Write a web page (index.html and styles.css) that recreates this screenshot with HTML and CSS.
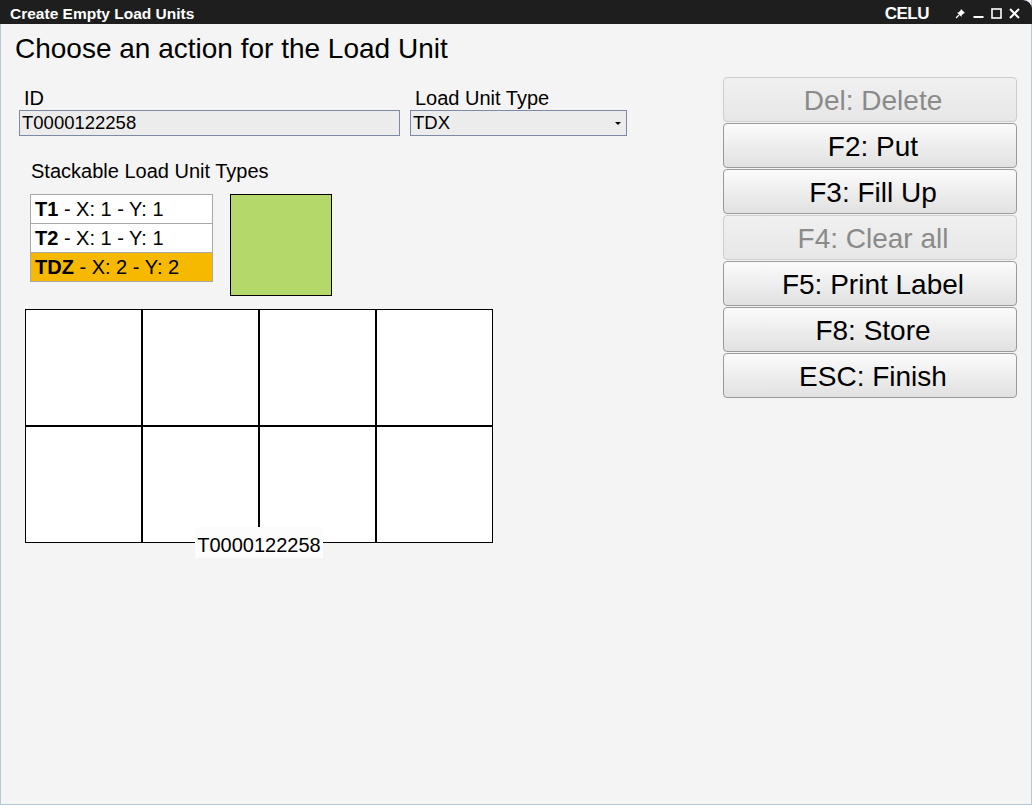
FILE: index.html
```html
<!DOCTYPE html>
<html>
<head>
<meta charset="utf-8">
<link rel="stylesheet" href="styles.css">
</head>
<body>
<div class="window">
  <div class="titlebar">
    <span class="title">Create Empty Load Units</span>
    <span class="code">CELU</span>
    <div class="winctl">
      <svg class="ico" width="11" height="11" viewBox="0 0 11 11"><path d="M6 1 L10 5 L8.5 5.5 L6.5 7.5 L6.5 9 L2 4.5 L3.5 4.5 L5.5 2.5 Z" fill="#fff"/><path d="M4 7 L1 10" stroke="#fff" stroke-width="1.3"/></svg>
      <svg class="ico" width="11" height="11" viewBox="0 0 11 11"><rect x="0.5" y="8" width="10" height="2" fill="#fff"/></svg>
      <svg class="ico" width="11" height="11" viewBox="0 0 11 11"><rect x="1" y="1" width="9" height="9" fill="none" stroke="#fff" stroke-width="1.6"/></svg>
      <svg class="ico" width="11" height="11" viewBox="0 0 11 11"><path d="M1 1 L10 10 M10 1 L1 10" stroke="#fff" stroke-width="2"/></svg>
    </div>
  </div>
  <div class="content">
    <h1 class="heading">Choose an action for the Load Unit</h1>
    <div class="main">
      <div class="left">
        <div class="fields">
          <div class="field field-id">
            <label class="lbl">ID</label>
            <div class="input">T0000122258</div>
          </div>
          <div class="field field-type">
            <label class="lbl">Load Unit Type</label>
            <div class="input select">TDX<span class="caret"></span></div>
          </div>
        </div>
        <div class="stack-label">Stackable Load Unit Types</div>
        <div class="stack-row">
          <div class="list">
            <div class="item"><b>T1</b> - X: 1 - Y: 1</div>
            <div class="item"><b>T2</b> - X: 1 - Y: 1</div>
            <div class="item sel"><b>TDZ</b> - X: 2 - Y: 2</div>
          </div>
          <div class="swatch"></div>
        </div>
        <div class="gridwrap">
          <div class="grid">
            <div class="cell"></div><div class="cell"></div><div class="cell"></div><div class="cell"></div>
            <div class="cell"></div><div class="cell"></div><div class="cell"></div><div class="cell"></div>
          </div>
          <div class="gridlabel">T0000122258</div>
        </div>
      </div>
      <div class="buttons">
        <div class="btn dis">Del: Delete</div>
        <div class="btn">F2: Put</div>
        <div class="btn">F3: Fill Up</div>
        <div class="btn dis">F4: Clear all</div>
        <div class="btn">F5: Print Label</div>
        <div class="btn">F8: Store</div>
        <div class="btn">ESC: Finish</div>
      </div>
    </div>
  </div>
</div>
</body>
</html>
```
FILE: styles.css
```css
* { box-sizing: border-box; }
html, body { margin: 0; padding: 0; }
body {
  width: 1032px;
  height: 805px;
  overflow: hidden;
  font-family: "Liberation Sans", Arial, sans-serif;
  background: #f4f4f4;
}
.window {
  width: 1032px;
  height: 805px;
  display: flex;
  flex-direction: column;
  border-left: 1px solid #b7c6d6;
  border-right: 1px solid #b7c6d6;
  border-bottom: 1px solid #b7c6d6;
  background: #f4f4f4;
}
.titlebar {
  height: 24px;
  margin: 0 -1px;
  background: #1e1e1e;
  border-radius: 0 9px 0 0;
  color: #fff;
  font-weight: bold;
  font-size: 15.5px;
  letter-spacing: 0;
  display: flex;
  align-items: center;
  padding: 4px 0 0 10px;
}
.title { flex: 1; }
.code { font-size: 17px; margin-right: 26px; letter-spacing: -0.5px; }
.winctl { display: flex; gap: 7px; align-items: center; margin-right: 12px; margin-top: -2px; }
.ico { display: block; }
.content { flex: 1; padding: 10px 14px 0 14px; }
.heading {
  margin: 0;
  font-weight: normal;
  font-size: 28px;
  line-height: 30px;
  color: #000;
}
.main { display: flex; justify-content: space-between; margin-top: 13px; }
.left { flex: 1; padding-left: 4px; }
.fields { display: flex; gap: 10px; margin-top: 10px; }
.field { display: flex; flex-direction: column; flex: none; }
.field-id { width: 381px; }
.field-type { width: 217px; }
.lbl { font-size: 20px; line-height: 22px; padding-left: 5px; color: #000; height: 22px; margin-bottom: 1px; }
.input {
  height: 26px;
  background: #ececec;
  border: 1px solid #7b8aa6;
  font-size: 18.5px;
  line-height: 24px;
  padding-left: 2px;
  color: #000;
  position: relative;
}
.caret {
  position: absolute;
  right: 5px;
  top: 11px;
  width: 0; height: 0;
  border-left: 3px solid transparent;
  border-right: 3px solid transparent;
  border-top: 3px solid #000;
}
.stack-label { font-size: 20px; line-height: 22px; margin-top: 24px; padding-left: 12px; }
.stack-row { display: flex; gap: 17px; margin-top: 12px; padding-left: 11px; }
.list {
  width: 183px;
  height: 88px;
  border: 1px solid #a8a8a8;
  background: #a8a8a8;
  display: flex;
  flex-direction: column;
  gap: 1px;
}
.item {
  height: 28px;
  background: #fff;
  font-size: 20px;
  line-height: 29px;
  padding-left: 4px;
}
.item.sel { background: #f7b800; }
.swatch {
  width: 102px;
  height: 102px;
  background: #b5d86a;
  border: 1px solid #000;
}
.gridwrap { position: relative; margin-top: 13px; padding-left: 6px; width: 480px; height: 250px; }
.grid {
  width: 468px;
  height: 234px;
  border: 1px solid #000;
  background: #000;
  display: grid;
  grid-template-columns: repeat(4, 1fr);
  grid-template-rows: repeat(2, 1fr);
  gap: 2px;
}
.cell { background: #fff; }
.gridlabel {
  position: absolute;
  left: 176px;
  top: 218px;
  width: 128px;
  height: 31px;
  background: #fcfcfc;
  font-size: 20px;
  line-height: 36px;
  text-align: center;
  color: #000;
}
.buttons {
  width: 294px;
  margin-right: 0;
  margin-top: 0;
  display: flex;
  flex-direction: column;
  gap: 1px;
}
.btn {
  height: 45px;
  border: 1px solid #9a9a9a;
  border-radius: 4px;
  background: linear-gradient(#fbfbfb, #e1e1e1);
  font-size: 28px;
  line-height: 45px;
  padding-left: 6px;
  text-align: center;
  color: #000;
}
.btn.dis {
  border-color: #cdcdcd;
  background: linear-gradient(#f0f0f0, #e7e7e7);
  color: #8a8a8a;
}
```
